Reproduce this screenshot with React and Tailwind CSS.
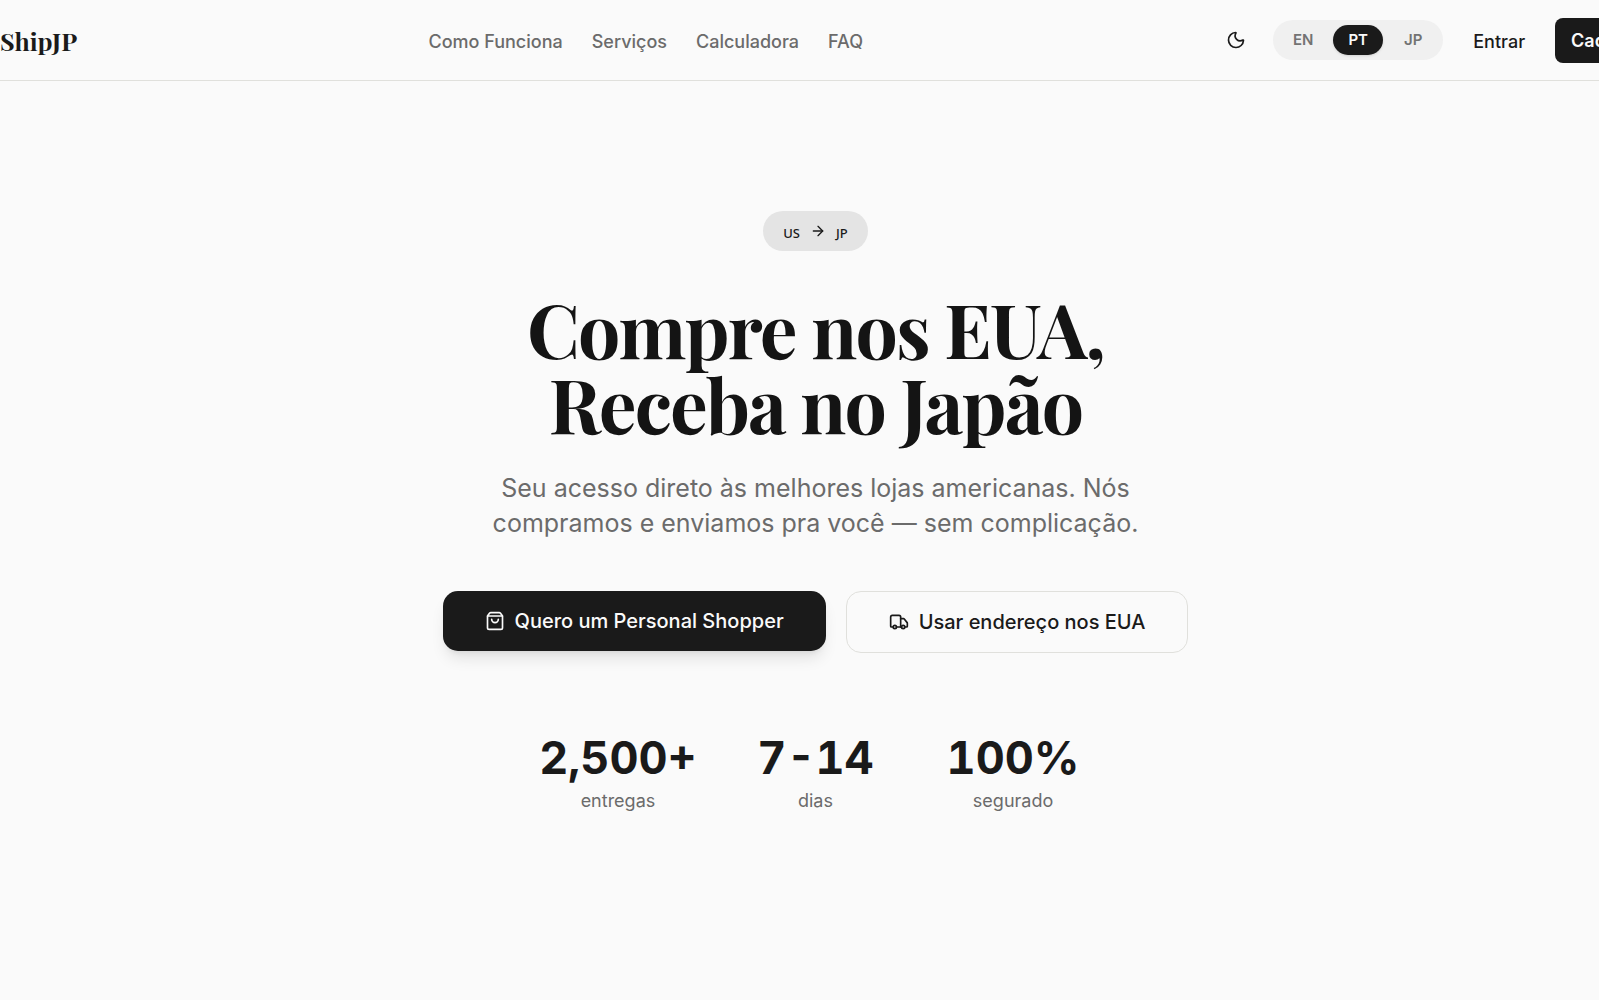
import { useState } from 'react'
import { ArrowRight, Moon, ShoppingBag, Truck } from 'lucide-react'

const NAV_LINKS = [
  { label: 'Como Funciona', href: '#como-funciona' },
  { label: 'Serviços', href: '#servicos' },
  { label: 'Calculadora', href: '#calculadora' },
  { label: 'FAQ', href: '#faq' },
]

const LANGUAGES = ['EN', 'PT', 'JP']

const STATS = [
  { value: '2,500+', label: 'entregas' },
  { value: '7-14', label: 'dias' },
  { value: '100%', label: 'segurado' },
]

function LanguageSwitch() {
  const [lang, setLang] = useState('PT')

  return (
    <div className="flex h-10 items-center gap-[5px] rounded-full bg-[#f0f0f0] px-[5px]">
      {LANGUAGES.map((code) => (
        <button
          key={code}
          type="button"
          onClick={() => setLang(code)}
          className={`h-[30px] w-[50px] rounded-full text-[15px] font-semibold ${
            code === lang ? 'bg-[#1a1a1a] text-[#fafafa] shadow-sm' : 'text-[#737373]'
          }`}
        >
          {code}
        </button>
      ))}
    </div>
  )
}

function Header() {
  return (
    <header className="border-b border-[#e0e0dc]">
      <div className="-mr-[74px] flex h-20 items-center justify-between whitespace-nowrap text-lg font-medium">
        <a href="#" className="pt-[3px] font-['Playfair_Display','Liberation_Serif',serif] text-[25px] font-bold">ShipJP</a>

        <nav className="flex gap-[29px] pt-[3px] text-[#6b6b6b]">
          {NAV_LINKS.map((link) => (
            <a key={link.href} href={link.href}>{link.label}</a>
          ))}
        </nav>

        <div className="flex items-center gap-[30px]">
          <div className="flex items-center gap-[15px]">
            <button type="button" aria-label="Modo escuro" className="flex size-11 items-center justify-center">
              <Moon size={20} strokeWidth={2} />
            </button>
            <LanguageSwitch />
          </div>
          <a href="#entrar" className="pt-[3px]">Entrar</a>
          <a href="#cadastrar" className="mt-px flex h-[45px] items-center rounded-lg bg-[#1a1a1a] px-4 font-semibold text-[#fafafa]">Cadastrar</a>
        </div>
      </div>
    </header>
  )
}

function Stat({ value, label }) {
  return (
    <div className="flex flex-col items-center">
      <p className="text-[45px] leading-[50px] font-bold tabular-nums">{value}</p>
      <p className="mt-[5px] text-lg leading-[26px] text-[#6b6b6b]">{label}</p>
    </div>
  )
}

export default function App() {
  return (
    <div className="min-h-screen overflow-x-hidden bg-[#fafafa] font-['Inter',sans-serif] text-[#1a1a1a]">
      <Header />

      <main className="-mr-8 flex flex-col items-center pt-[130px] pb-40 text-center">
        <div className="flex h-10 items-center gap-[10px] rounded-full bg-[#e4e4e4] px-5 font-['Noto_Sans',sans-serif] text-[13px] font-medium">
          <span className="pt-[6px]">US</span>
          <ArrowRight size={16} strokeWidth={2} />
          <span className="pt-[6px]">JP</span>
        </div>

        <h1 className="mt-10 font-['Playfair_Display','Liberation_Serif',serif] text-[75px] leading-[75px] font-bold tracking-tight text-[#141414]">
          Compre nos EUA,
          <br />
          Receba no Japão
        </h1>

        <p className="mt-[30px] text-[25px] leading-[35px] text-[#6b6b6b]">
          Seu acesso direto às melhores lojas americanas. Nós
          <br />
          compramos e enviamos pra você — sem complicação.
        </p>

        <div className="mt-[50px] flex items-start gap-5 text-xl font-medium">
          <a href="#personal-shopper" className="flex h-[60px] items-center gap-[10px] rounded-[15px] bg-[#1a1a1a] px-[42px] text-[#fafafa] shadow-lg">
            <ShoppingBag size={20} strokeWidth={2} />
            Quero um Personal Shopper
          </a>
          <a href="#endereco" className="flex h-[62px] items-center gap-[10px] rounded-[15px] border border-[#e0e0dc] px-[42px]">
            <Truck size={20} strokeWidth={2} />
            Usar endereço nos EUA
          </a>
        </div>

        <div className="mt-20 grid grid-cols-3 gap-10">
          {STATS.map((stat) => (
            <Stat key={stat.label} value={stat.value} label={stat.label} />
          ))}
        </div>
      </main>
    </div>
  )
}
